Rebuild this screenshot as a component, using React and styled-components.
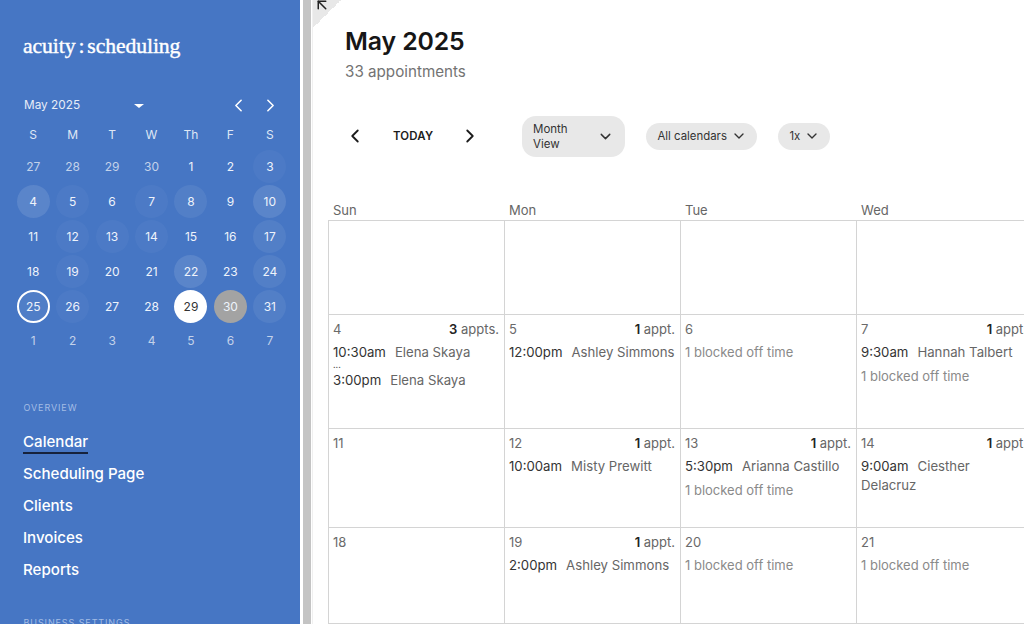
import React from "react";
import styled, { createGlobalStyle } from "styled-components";
import { ChevronLeft, ChevronRight, ChevronDown, ArrowUpLeft } from "lucide-react";

const weekdays = ["S", "M", "T", "W", "Th", "F", "S"];

// level: 0 none, 1 faint, 2 stronger, plus a few special days
const days = [
    ["27", "muted"], ["28", "muted"], ["29", "muted"], ["30", "muted"], ["1"], ["2"], ["3", "", 1],
    ["4", "", 3], ["5", "", 1], ["6"], ["7", "", 1], ["8", "", 2], ["9"], ["10", "", 3],
    ["11"], ["12", "", 1], ["13", "", 1], ["14", "", 1], ["15"], ["16"], ["17", "", 2],
    ["18"], ["19", "", 1], ["20"], ["21"], ["22", "", 3], ["23"], ["24", "", 2],
    ["25", "ring"], ["26", "", 1], ["27"], ["28"], ["29", "today"], ["30", "grey"], ["31", "", 2],
    ["1", "muted"], ["2", "muted"], ["3", "muted"], ["4", "muted"], ["5", "muted"], ["6", "muted"], ["7", "muted"],
];

const navItems = ["Calendar", "Scheduling Page", "Clients", "Invoices", "Reports"];

const weeks = [
    { height: 94, cells: [{}, {}, {}, {}] },
    {
        height: 114,
        cells: [
            { day: "4", count: "3", unit: "appts.", appts: [["10:30am", "Elena Skaya"], ["3:00pm", "Elena Skaya"]], more: true },
            { day: "5", count: "1", unit: "appt.", appts: [["12:00pm", "Ashley Simmons"]] },
            { day: "6", blocked: true },
            { day: "7", count: "1", unit: "appt.", appts: [["9:30am", "Hannah Talbert"]], blocked: true },
        ],
    },
    {
        height: 99,
        cells: [
            { day: "11" },
            { day: "12", count: "1", unit: "appt.", appts: [["10:00am", "Misty Prewitt"]] },
            { day: "13", count: "1", unit: "appt.", appts: [["5:30pm", "Arianna Castillo"]], blocked: true },
            { day: "14", count: "1", unit: "appt.", appts: [["9:00am", "Ciesther Delacruz"]] },
        ],
    },
    {
        height: 96,
        cells: [
            { day: "18" },
            { day: "19", count: "1", unit: "appt.", appts: [["2:00pm", "Ashley Simmons"]] },
            { day: "20", blocked: true },
            { day: "21", blocked: true },
        ],
    },
];

function Logo() {
    return (
        <LogoText>acuity<LogoColon>:</LogoColon>scheduling</LogoText>
    );
}

function MiniCalendar() {
    return (
        <MiniWrap>
            <MiniHeader>
                <MiniTitle>May 2025</MiniTitle>
                <Caret />
                <MiniArrows>
                    <ChevronLeft size={21} strokeWidth={1.8} />
                    <ChevronRight size={21} strokeWidth={1.8} />
                </MiniArrows>
            </MiniHeader>
            <WeekdayRow>
                {weekdays.map((d, i) => <Weekday key={i}>{d}</Weekday>)}
            </WeekdayRow>
            <DayGrid>
                {days.map(([label, kind, level], i) => (
                    <DayCell key={i}>
                        <DayCircle $kind={kind} $level={level}>{label}</DayCircle>
                    </DayCell>
                ))}
            </DayGrid>
        </MiniWrap>
    );
}

function Sidebar() {
    return (
        <Side>
            <Logo />
            <MiniCalendar />
            <SectionLabel>OVERVIEW</SectionLabel>
            <Nav>
                {navItems.map((item, i) => <NavItem key={item} $active={i === 0}>{item}</NavItem>)}
            </Nav>
            <SectionLabelLow>BUSINESS SETTINGS</SectionLabelLow>
        </Side>
    );
}

function DayBox({ cell }) {
    return (
        <Cell>
            <CellTop>
                <span>{cell.day}</span>
                {cell.count && <Count><b>{cell.count}</b> {cell.unit}</Count>}
            </CellTop>
            {cell.appts && cell.appts.map(([time, name], i) => (
                <React.Fragment key={i}>
                    {i > 0 && cell.more && <MoreDots>...</MoreDots>}
                    <Appt $tight={i > 0 && cell.more}><ApptTime>{time}</ApptTime>{name}</Appt>
                </React.Fragment>
            ))}
            {cell.blocked && <Blocked $afterAppt={!!cell.appts}>1 blocked off time</Blocked>}
        </Cell>
    );
}

function App() {
    return (
        <>
            <GlobalStyle />
            <Page>
                <Sidebar />
                <Divider />
                <Main>
                    <Corner><ArrowUpLeft size={18} strokeWidth={2} color="#222" /></Corner>
                    <Head>
                        <Title>May 2025</Title>
                        <Sub>33 appointments</Sub>
                    </Head>
                    <Toolbar>
                        <PagerBtn><ChevronLeft size={22} strokeWidth={2} /></PagerBtn>
                        <Today>TODAY</Today>
                        <PagerBtn><ChevronRight size={22} strokeWidth={2} /></PagerBtn>
                        <ViewSelect>
                            <span>Month<br />View</span>
                            <ChevronDown size={17} strokeWidth={2} />
                        </ViewSelect>
                        <Pill>All calendars<ChevronDown size={16} strokeWidth={2} /></Pill>
                        <Pill>1x<ChevronDown size={16} strokeWidth={2} /></Pill>
                    </Toolbar>
                    <HeaderRow>
                        {["Sun", "Mon", "Tue", "Wed"].map((d) => <HeaderCell key={d}>{d}</HeaderCell>)}
                    </HeaderRow>
                    <Grid>
                        {weeks.map((w, i) => (
                            <Week key={i} $height={w.height}>
                                {w.cells.map((c, j) => <DayBox key={j} cell={c} />)}
                            </Week>
                        ))}
                    </Grid>
                </Main>
            </Page>
        </>
    );
}

export default App;

const GlobalStyle = createGlobalStyle`
    html, body {
        margin: 0;
        padding: 0;
        background: #fff;
        overflow: hidden;
    }
    * {
        box-sizing: border-box;
    }
`;

const Page = styled.div`
    width: 1024px;
    height: 624px;
    display: flex;
    overflow: hidden;
    font-family: Inter, "Liberation Sans", sans-serif;
`;

const Side = styled.aside`
    width: 300px;
    height: 624px;
    flex-shrink: 0;
    background: #4676c4;
    color: #fff;
    overflow: hidden;
    padding-top: 34px;
`;

const LogoText = styled.div`
    font-family: "Liberation Serif", serif;
    font-size: 21.7px;
    line-height: 24px;
    font-weight: 400;
    -webkit-text-stroke: 0.4px #fff;
    letter-spacing: -0.1px;
    padding-left: 23px;
`;

const LogoColon = styled.span`
    margin: 0 3px 0 3px;
`;

const MiniWrap = styled.div`
    padding: 0 0 0 13.5px;
    margin-top: 35px;
`;

const MiniHeader = styled.div`
    display: flex;
    align-items: center;
    height: 24px;
    padding-left: 10.5px;
`;

const MiniTitle = styled.span`
    font-size: 11.8px;
    width: 110px;
    color: #e6edf8;
`;

const Caret = styled.span`
    width: 0;
    height: 0;
    border-left: 5px solid transparent;
    border-right: 5px solid transparent;
    border-top: 4.5px solid #fff;
    margin-top: 1px;
`;

const MiniArrows = styled.div`
    display: flex;
    gap: 11px;
    margin-left: 84px;
`;

const WeekdayRow = styled.div`
    display: grid;
    grid-template-columns: repeat(7, 39.45px);
    margin-top: 7px;
    height: 20px;
    align-items: center;
`;

const Weekday = styled.span`
    text-align: center;
    font-size: 12px;
    color: #dfe7f5;
`;

const DayGrid = styled.div`
    display: grid;
    grid-template-columns: repeat(7, 39.45px);
    grid-auto-rows: 34.8px;
    margin-top: 5.5px;
`;

const DayCell = styled.div`
    display: flex;
    align-items: center;
    justify-content: center;
`;

const circleBg = (p) => {
    if (p.$kind === "today") return "#fff";
    if (p.$kind === "grey") return "#a3a3a3";
    if (p.$kind === "ring") return "rgba(255,255,255,0.06)";
    if (p.$level === 1) return "rgba(255,255,255,0.035)";
    if (p.$level === 2) return "rgba(255,255,255,0.065)";
    if (p.$level === 3) return "rgba(255,255,255,0.11)";
    return "transparent";
};

const DayCircle = styled.span`
    width: 33px;
    height: 33px;
    border-radius: 50%;
    display: flex;
    align-items: center;
    justify-content: center;
    font-size: 12px;
    background: ${circleBg};
    border: ${(p) => (p.$kind === "ring" ? "2px solid #fff" : "none")};
    color: ${(p) => {
        if (p.$kind === "today") return "#333";
        if (p.$kind === "muted") return "#c3d2ea";
        return "#eef3fb";
    }};
`;

const SectionLabel = styled.div`
    font-size: 9px;
    line-height: 12px;
    letter-spacing: 0.9px;
    color: #a4bde4;
    padding-left: 23.5px;
    margin-top: 43.5px;
`;

const SectionLabelLow = styled(SectionLabel)`
    margin-top: 35px;
`;

const Nav = styled.nav`
    display: flex;
    flex-direction: column;
    align-items: flex-start;
    gap: 8px;
    padding-left: 23px;
    margin-top: 16px;
`;

const NavItem = styled.a`
    font-size: 15.1px;
    line-height: 24px;
    font-weight: 500;
    color: #fff;
    height: 24px;
    box-shadow: ${(p) => (p.$active ? "inset 0 -2px 0 #16223c" : "none")};
`;

const Divider = styled.div`
    width: 8px;
    margin: 0 1px 0 3px;
    background: #c4c4c4;
    flex-shrink: 0;
`;

const Main = styled.main`
    position: relative;
    flex: 1;
    min-width: 0;
    height: 624px;
    overflow: hidden;
    padding-left: 15px;
    border-left: 1px solid #f0f0f0;
`;

const Corner = styled.div`
    position: absolute;
    left: 0;
    top: 0;
    width: 28px;
    height: 28px;
    background: linear-gradient(135deg, #e8e8e8 50%, transparent 50%);

    svg {
        position: absolute;
        left: 0;
        top: -4px;
    }
`;

const Head = styled.header`
    padding: 24px 0 0 17px;
`;

const Title = styled.h1`
    margin: 0;
    font-size: 24.8px;
    line-height: 34px;
    font-weight: 600;
    letter-spacing: -0.1px;
    color: #161616;
`;

const Sub = styled.div`
    margin-top: 5px;
    font-size: 15.2px;
    line-height: 18px;
    color: #737373;
`;

const Toolbar = styled.div`
    display: flex;
    align-items: center;
    margin-top: 35px;
    height: 41px;
    padding-left: 16px;
    color: #1c1c1c;
`;

const PagerBtn = styled.span`
    display: flex;
    width: 22px;
    height: 22px;
    margin-bottom: 2px;
`;

const Today = styled.span`
    font-size: 11.4px;
    font-weight: 600;
    letter-spacing: 0.2px;
    width: 39px;
    margin: 0 27px 2px 27px;
    white-space: nowrap;
`;

const ViewSelect = styled.div`
    width: 103px;
    height: 41px;
    margin-left: 41px;
    padding: 0 11px 0 11px;
    background: #e8e8e8;
    border-radius: 14px;
    display: flex;
    align-items: center;
    justify-content: space-between;
    font-size: 11.5px;
    line-height: 15px;
    color: #333;
`;

const Pill = styled.div`
    height: 27px;
    margin-left: 21px;
    padding: 0 10px 2px 11.5px;
    background: #e8e8e8;
    border-radius: 14px;
    display: flex;
    align-items: center;
    gap: 4px;
    font-size: 11.4px;
    color: #333;
    white-space: nowrap;
`;

const HeaderRow = styled.div`
    display: flex;
    margin-top: 44px;
    height: 19px;
`;

const HeaderCell = styled.div`
    width: 176px;
    flex-shrink: 0;
    padding-left: 5px;
    font-size: 13px;
    line-height: 18px;
    color: #666;
`;

const Grid = styled.div`
    width: 705px;
    border-top: 1px solid #d4d4d4;
    border-left: 1px solid #d4d4d4;
`;

const Week = styled.div`
    display: grid;
    grid-template-columns: repeat(4, 176px);
    height: ${(p) => p.$height}px;
    border-bottom: 1px solid #d4d4d4;
`;

const Cell = styled.div`
    border-right: 1px solid #d4d4d4;
    padding: 6px 5px 0 4px;
    font-size: 13px;
    line-height: 16px;
    color: #5e5e5e;
`;

const CellTop = styled.div`
    display: flex;
    justify-content: space-between;
    height: 16px;
    white-space: nowrap;
    color: #6a6a6a;
`;

const Count = styled.span`
    color: #666;

    b {
        color: #222;
        font-weight: 600;
    }
`;

const Appt = styled.div`
    margin-top: ${(p) => (p.$tight ? "0" : "6px")};
    font-size: 13.2px;
    line-height: 19px;
    color: #666;
`;

const ApptTime = styled.span`
    color: #333;
    margin-right: 9px;
`;

const MoreDots = styled.div`
    height: 9px;
    font-size: 9px;
    line-height: 6px;
    color: #555;
`;

const Blocked = styled.div`
    margin-top: ${(p) => (p.$afterAppt ? "5px" : "6px")};
    line-height: 19px;
    color: #8a8a8a;
`;
